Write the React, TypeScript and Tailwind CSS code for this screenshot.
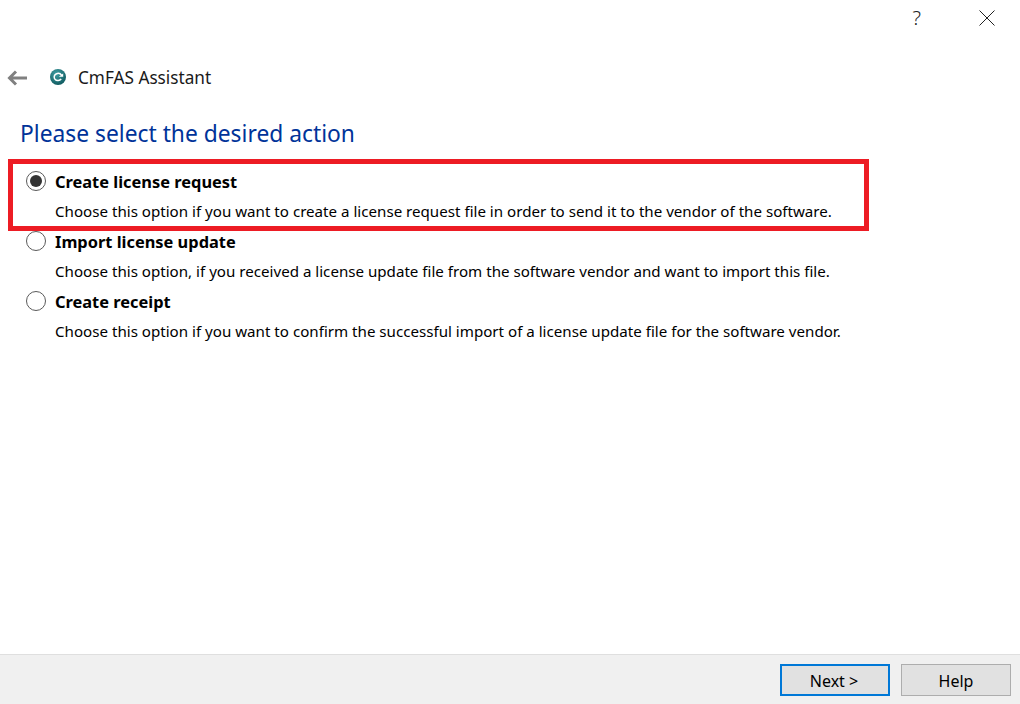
const options = [
  {
    title: "Create license request",
    text: "Choose this option if you want to create a license request file in order to send it to the vendor of the software.",
    checked: true,
  },
  {
    title: "Import license update",
    text: "Choose this option, if you received a license update file from the software vendor and want to import this file.",
    checked: false,
  },
  {
    title: "Create receipt",
    text: "Choose this option if you want to confirm the successful import of a license update file for the software vendor.",
    checked: false,
  },
];

function Logo() {
  return (
    <svg className="block" width="16" height="16" viewBox="0 0 16 16">
      <defs>
        <radialGradient id="logo" cx="0.4" cy="0.3" r="0.8">
          <stop offset="0" stopColor="#3f9ea3" />
          <stop offset="1" stopColor="#0b5358" />
        </radialGradient>
      </defs>
      <circle cx="8" cy="8" r="8" fill="url(#logo)" />
      <path d="M11.5 6.2A4 4 0 0 0 4.2 7.6A3.4 3.4 0 0 0 8 11.4A3.8 3.8 0 0 0 11.2 10" fill="none" stroke="#fff" strokeWidth="1.5" />
      <path d="M8.8 7.8h4.4v-3.4z" fill="#fff" />
    </svg>
  );
}

function Radio({ checked }: { checked: boolean }) {
  return (
    <span className="flex h-[20px] w-[20px] shrink-0 items-center justify-center rounded-full border-[1.5px] border-[#5a5a5a] bg-white">
      {checked && <span className="h-[12px] w-[12px] rounded-full bg-[#333333]" />}
    </span>
  );
}

export default function App() {
  return (
    <div className="flex h-[704px] w-[1020px] flex-col bg-white font-['Noto_Sans',sans-serif] text-[15.1px] text-black">
      <div className="flex h-[36px] items-center justify-end">
        <span className="mr-[58px] text-[20px] font-light text-[#222222]">?</span>
        <svg className="mr-[25px]" width="16" height="16" viewBox="0 0 16 16">
          <path d="M0.5 0.5L15.5 15.5M15.5 0.5L0.5 15.5" stroke="#222222" strokeWidth="1" fill="none" />
        </svg>
      </div>

      <div className="mt-[20px] flex h-[40px] items-center pl-[7px] pt-[4px]">
        <svg width="21" height="16" viewBox="0 0 21 16">
          <path d="M20 8H3M9 1.5L2.5 8L9 14.5" stroke="#808080" strokeWidth="3" fill="none" />
        </svg>
        <span className="ml-[22px] -translate-y-[1px]">
          <Logo />
        </span>
        <span className="ml-[12px] text-[17.2px] text-[#1a1a1a]">CmFAS Assistant</span>
      </div>

      <h1 className="mt-[22px] pl-[20px] text-[22.8px] leading-[32px] text-[#003399]">
        Please select the desired action
      </h1>

      <div className="relative mt-[17px] flex flex-col pl-[26px]">
        <div className="absolute left-[8px] top-[-8px] h-[72px] w-[861px] border-[5px] border-[#ed1c24]" />
        {options.map((o) => (
          <div key={o.title} className="flex h-[60px] flex-col">
            <div className="flex h-[30px] items-center gap-[9px]">
              <span className="-translate-y-[1px]">
                <Radio checked={o.checked} />
              </span>
              <span className="text-[16.4px] font-bold">{o.title}</span>
            </div>
            <p className="flex h-[30px] items-center pl-[29px] pb-[1px] text-[15.13px]">{o.text}</p>
          </div>
        ))}
      </div>

      <div className="mt-auto flex h-[50px] items-center justify-end gap-[11px] border-t border-[#dfdfdf] bg-[#f0f0f0] pr-[9px] text-[16px]">
        <button className="h-[32px] w-[110px] border-2 border-[#0078d7] bg-[#e1e1e1] pt-[2px] pr-[2px]">Next &gt;</button>
        <button className="h-[32px] w-[110px] border border-[#adadad] bg-[#e1e1e1] pt-[2px]">Help</button>
      </div>
    </div>
  );
}
